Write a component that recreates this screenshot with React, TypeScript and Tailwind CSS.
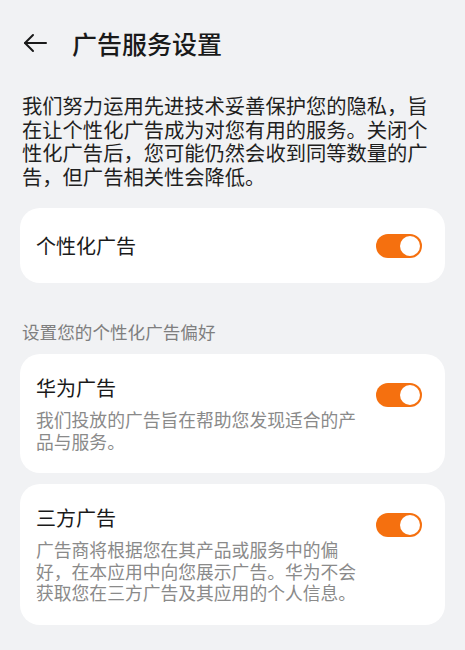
import React from 'react';

const FONT = "font-['Noto_Sans_CJK_SC','Noto_Sans',sans-serif]";

function Toggle() {
  return (
    <div className="w-[46px] h-[24px] rounded-full bg-[#f5700f] p-[2px] flex justify-end shrink-0">
      <div className="w-[20px] h-[20px] rounded-full bg-white" />
    </div>
  );
}

function DetailCard({ title, desc }: { title: string; desc: string }) {
  return (
    <div className="bg-white rounded-[20px] pl-[16px] pr-[23px] pt-[21px] pb-[21px] flex items-start justify-between">
      <div className="w-[325px]">
        <div className="text-[20px] leading-[26px] text-[#1a1a1a]">{title}</div>
        <p className="mt-[8px] text-[17.8px] leading-[21.5px] text-[#8a8a8a]">{desc}</p>
      </div>
      <div className="mt-[8px]">
        <Toggle />
      </div>
    </div>
  );
}

export default function App() {
  return (
    <div className={`min-h-screen bg-[#f1f2f4] px-[20px] ${FONT}`}>
      <header className="h-[86px] flex items-center pl-[3px]">
        <svg width="25" height="20" viewBox="0 0 25 20" fill="none" stroke="#1a1a1a" strokeWidth="2" strokeLinecap="round" strokeLinejoin="round">
          <path d="M23 10H2" />
          <path d="M10 2L2 10L10 18" />
        </svg>
        <h1 className="ml-[24px] text-[25px] leading-[34px] font-medium text-[#1a1a1a]">广告服务设置</h1>
      </header>

      <p className="mt-[8px] px-[2px] text-[20.3px] leading-[23.5px] text-[#1f1f1f]">
        我们努力运用先进技术妥善保护您的隐私，旨在让个性化广告成为对您有用的服务。关闭个性化广告后，您可能仍然会收到同等数量的广告，但广告相关性会降低。
      </p>

      <div className="mt-[20px] h-[75px] bg-white rounded-[20px] pl-[16px] pr-[23px] flex items-center justify-between">
        <span className="text-[20px] text-[#1a1a1a]">个性化广告</span>
        <Toggle />
      </div>

      <div className="mt-[37px] mb-[10px] px-[2px] text-[17.6px] leading-[24px] text-[#7f7f7f]">
        设置您的个性化广告偏好
      </div>

      <div className="flex flex-col gap-[11px] pb-[26px]">
        <DetailCard title="华为广告" desc="我们投放的广告旨在帮助您发现适合的产品与服务。" />
        <DetailCard
          title="三方广告"
          desc="广告商将根据您在其产品或服务中的偏好，在本应用中向您展示广告。华为不会获取您在三方广告及其应用的个人信息。"
        />
      </div>
    </div>
  );
}
